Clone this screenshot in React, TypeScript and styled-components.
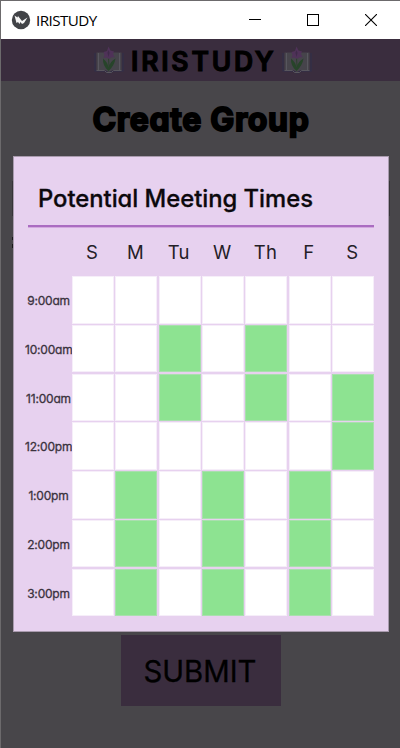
import React from "react";
import styled, { createGlobalStyle } from "styled-components";

const GlobalStyle = createGlobalStyle`
  * { box-sizing: border-box; }
  body { margin: 0; background: #48464a; overflow: hidden; }
`;

const rounded = `font-family: Inter, "Liberation Sans", sans-serif; font-feature-settings: "cv11" 1, "ss03" 1; stroke-linejoin: round;`;

const Window = styled.div`
  position: relative;
  width: 400px;
  height: 748px;
  display: flex;
  flex-direction: column;
  background: #48464a;
  border-top: 1px solid #6c6a6c;
  border-left: 1px solid #6c6a6c;
  overflow: hidden;
`;

const TitleBar = styled.header`
  height: 38px;
  flex: none;
  display: flex;
  align-items: center;
  background: #fff;
  padding-left: 10px;
  svg { display: block; flex: none; }
`;

const WindowTitle = styled.span`
  margin-left: 5px;
  flex: 1;
  font: 15.2px/20px "Open Sans", "Noto Sans", sans-serif;
  letter-spacing: -0.55px;
  padding-bottom: 1px;
  color: #000;
`;

const Controls = styled.div`
  display: flex;
  gap: 46px;
  margin-right: 23px;
`;

const Brand = styled.div`
  height: 42px;
  flex: none;
  display: flex;
  align-items: center;
  padding-left: 92px;
  background: #3a2d3e;
`;

const BrandName = styled.span`
  ${rounded}
  margin-left: 6px;
  width: 150px;
  white-space: nowrap;
  font-size: 26.5px;
  line-height: 42px;
  padding-top: 1px;
  font-weight: 600;
  letter-spacing: 2.8px;
  color: #000;
  -webkit-text-stroke: 1.1px #000;
`;

const PageTitle = styled.h1`
  ${rounded}
  margin: 17px 0 0 1px;
  text-align: center;
  white-space: nowrap;
  font-size: 32px;
  line-height: 44px;
  font-weight: 700;
  letter-spacing: 0.65px;
  color: #000;
  -webkit-text-stroke: 1.9px #000;
`;

const Modal = styled.section`
  width: 376px;
  height: 476px;
  margin: 14px 0 0 12px;
  flex: none;
  padding: 0 14px;
  background: #e7d1ef;
  border: 1px solid #a99bae;
`;

const ModalTitle = styled.h2`
  ${rounded}
  margin: 0;
  height: 70px;
  padding: 26px 0 0 10px;
  border-bottom: 2px solid #aa6cc1;
  box-shadow: 0 1px #d3a8df;
  white-space: nowrap;
  font-size: 23.8px;
  line-height: 32px;
  font-weight: 500;
  letter-spacing: -0.02px;
  color: #0c090d;
  -webkit-text-stroke: 0.3px #0c090d;
`;

const Days = styled.div`
  display: grid;
  grid-template-columns: repeat(7, 43.4px);
  height: 49px;
  padding-left: 43px;
`;

const Day = styled.span`
  ${rounded}
  width: 42px;
  text-align: center;
  font-size: 18.5px;
  line-height: 51px;
  letter-spacing: 0.3px;
  color: #242027;
`;

const TimeRow = styled.div`
  display: grid;
  grid-template-columns: 42.4px repeat(7, 42px);
  column-gap: 1.4px;
  height: 48.8px;
`;

const Time = styled.span`
  ${rounded}
  margin-left: -3px;
  width: 47px;
  text-align: center;
  white-space: nowrap;
  font-size: 12px;
  line-height: 49px;
  letter-spacing: -0.2px;
  color: #3b333e;
  -webkit-text-stroke: 0.3px #3b333e;
`;

const Cell = styled.div<{ $free: boolean }>`
  height: 47.5px;
  background: ${(p) => (p.$free ? "#8de391" : "#fff")};
  border: 1px solid ${(p) => (p.$free ? "#a9dfae" : "#f6eef9")};
`;

const Submit = styled.button`
  ${rounded}
  margin: 3px 0 0 120px;
  width: 160px;
  height: 71px;
  flex: none;
  padding: 2px 2px 0 0;
  border: 0;
  background: #3a2d3e;
  color: #000;
  font-size: 29.3px;
  white-space: nowrap;
  -webkit-text-stroke: 0.3px #000;
`;

const Peek = styled.span<{ $x: number; $y: number; $h: number; $c: string }>`
  position: absolute;
  left: ${(p) => p.$x}px;
  top: ${(p) => p.$y}px;
  width: 1px;
  height: ${(p) => p.$h}px;
  background: ${(p) => p.$c};
`;

const IrisBook = () => (
  <svg width="32" height="34" viewBox="0 0 32 34">
    <path d="M2 10v18h10l4 2 4-2h10V10" fill="none" stroke="#31304a" strokeWidth="1.2" />
    <path d="M3.500 9.500H12l4 2 4-2h8.500V27H20l-4 2-4-2H3.500z" fill="#46444b" />
    <path d="M3.500 27.500h8l2 2h5l2-2h8M5.500 10v17M26.500 10v17" fill="none" stroke="#58565e" />
    <path d="M15.500 28Q9.500 23 10 15.500Q14.500 19 15.500 24.500Q17 18.500 22.500 15.500Q21.500 22.500 15.500 28z" fill="#27442a" />
    <path d="M15.500 14L16 24" stroke="#2b402c" strokeWidth="1" />
    <path d="M15.500 3.500l2 4 3.500 1-1 2.500 1.500 3-3.500.5-2 1.500-2.500-1.500-3 .5 1-3-1-3 3.500-1z" fill="#4f3258" />
    <path d="M15.500 7l1 3-1 4-1-4z" fill="#3f2b49" />
  </svg>
);

const days = ["S", "M", "Tu", "W", "Th", "F", "S"];
const slots: [string, number[]][] = [
  ["9:00am", []],
  ["10:00am", [2, 4]],
  ["11:00am", [2, 4, 6]],
  ["12:00pm", [6]],
  ["1:00pm", [1, 3, 5]],
  ["2:00pm", [1, 3, 5]],
  ["3:00pm", [1, 3, 5]],
];

export default function App() {
  return (
    <>
      <GlobalStyle />
      <Window>
        <TitleBar>
          <svg width="20" height="20" viewBox="0 0 20 20">
            <circle cx="10" cy="10" r="9.2" fill="#414347" />
            <path d="M3.500 5.500l3 2 .5-1.500 4 5 5.500-3.500-3.500 5.500-2 1-1.500-2-1 2-1.500-2-1.500 1z" fill="#f5f5f5" />
          </svg>
          <WindowTitle>IRISTUDY</WindowTitle>
          <Controls>
            <svg width="12" height="12"><path d="M0 5.5h12" stroke="#000" /></svg>
            <svg width="12" height="12"><rect x=".5" y=".5" width="11" height="11" fill="none" stroke="#000" /></svg>
            <svg width="12" height="12"><path d="M0 0l12 12M12 0L0 12" stroke="#000" strokeWidth="1.1" /></svg>
          </Controls>
        </TitleBar>
        <Brand>
          <IrisBook />
          <BrandName>IRISTUDY</BrandName>
          <IrisBook />
        </Brand>
        <PageTitle>Create Group</PageTitle>
        <Modal>
          <ModalTitle>Potential Meeting Times</ModalTitle>
          <Days>
            {days.map((d, i) => <Day key={i}>{d}</Day>)}
          </Days>
          {slots.map(([time, free]) => (
            <TimeRow key={time}>
              <Time>{time}</Time>
              {days.map((_, i) => <Cell key={i} $free={free.includes(i)} />)}
            </TimeRow>
          ))}
        </Modal>
        <Submit>SUBMIT</Submit>
        <Peek $x={11} $y={180} $h={35} $c="#363438" />
        <Peek $x={388} $y={180} $h={35} $c="#363438" />
        <Peek $x={11} $y={236} $h={3} $c="#19181a" />
        <Peek $x={11} $y={243} $h={4} $c="#19181a" />
      </Window>
    </>
  );
}
